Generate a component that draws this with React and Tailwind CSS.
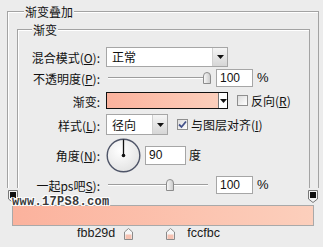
import React from 'react';

const cjk = { fontFamily: '"Noto Sans CJK SC", "Noto Sans", sans-serif' };

function Arrow(){
  return (
    <svg width="7" height="4" viewBox="0 0 7 4"><path d="M0 0 H7 L3.5 4 Z" fill="#111"/></svg>
  );
}

function SelectBox({ w, text, h }){
  return (
    <div className={`${w} ${h} ml-[6px] flex items-center bg-white border border-[#a6a6a6]`}>
      <span className="flex-1 pl-[5px] text-[12px] leading-none text-[#111]" style={cjk}>{text}</span>
      <div className="w-[15px] h-full border-l border-[#d0d0d0] bg-gradient-to-b from-[#f5f5f5] to-[#d6d6d6] flex items-center justify-center">
        <Arrow/>
      </div>
    </div>
  );
}

function Thumb(){
  return (
    <svg width="8" height="12" viewBox="0 0 8 12">
      <defs>
        <linearGradient id="tg" x1="0" x2="1">
          <stop offset="0" stopColor="#fafafa"/>
          <stop offset="1" stopColor="#c9c9c9"/>
        </linearGradient>
      </defs>
      <path d="M0.5 11.5 V4 Q0.5 0.5 4 0.5 Q7.5 0.5 7.5 4 V11.5 Z" fill="url(#tg)" stroke="#8c8c8c"/>
    </svg>
  );
}

function Slider({ pos }){
  return (
    <div className="relative w-[106px] h-[14px] ml-[6px]">
      <div className="absolute left-[2px] right-[4px] top-[6px] h-[2px] border-t border-[#9d9d9d] bg-white"/>
      <div className="absolute top-[1px]" style={{ left: pos }}><Thumb/></div>
    </div>
  );
}

function NumInput({ w, h, value }){
  return (
    <div className={`${w} ${h} bg-white border border-[#a6a6a6] flex items-center pl-[3px] text-[12px] text-[#111]`} style={{ fontFamily: '"Liberation Sans", Arial, sans-serif' }}>
      {value}
    </div>
  );
}

function Check({ checked }){
  return (
    <div className="w-[11px] h-[11px] border border-[#8e8e8e] bg-gradient-to-br from-[#dcdcdc] to-[#ffffff] flex items-center justify-center">
      {checked && (
        <svg width="9" height="9" viewBox="0 0 9 9"><path d="M1 4.5 L3.5 7 L8 1.5" fill="none" stroke="#44528a" strokeWidth="1.8"/></svg>
      )}
    </div>
  );
}

function Label({ children }){
  return <div className="w-[82px] pt-[2px] text-right text-[12px] leading-none text-[#111]" style={cjk}>{children}</div>;
}

function Dial(){
  return (
    <svg width="35" height="35" viewBox="0 0 35 35" className="ml-[6px]">
      <defs>
        <radialGradient id="dg" cx="0.4" cy="0.35" r="0.7">
          <stop offset="0" stopColor="#ffffff"/>
          <stop offset="1" stopColor="#e2e2e2"/>
        </radialGradient>
      </defs>
      <circle cx="17.5" cy="17.5" r="16.3" fill="url(#dg)" stroke="#4f5568" strokeWidth="1.4"/>
      <line x1="17.5" y1="17.5" x2="17.5" y2="1.5" stroke="#111" strokeWidth="1.3"/>
      <circle cx="17.5" cy="17.5" r="1.8" fill="#111"/>
    </svg>
  );
}

function TopStop(){
  return (
    <svg width="10" height="13" viewBox="0 0 10 13">
      <path d="M0.5 0.5 H9.5 V9 L5 12.5 L0.5 9 Z" fill="#f4f4f4" stroke="#777"/>
      <rect x="2" y="2" width="6" height="6" fill="#111"/>
    </svg>
  );
}

function BottomStop(){
  return (
    <svg width="9" height="12" viewBox="0 0 9 12">
      <path d="M0.5 11.5 V4 L4.5 0.5 L8.5 4 V11.5 Z" fill="#f6f6f6" stroke="#8a8a8a"/>
      <rect x="1.5" y="6.5" width="6" height="4.5" fill="#f6c2b2"/>
    </svg>
  );
}

export default function App(){
  return (
    <div className="w-[323px] h-[247px] bg-[#ececec] overflow-hidden relative">
      <div className="h-[188px] pt-[11px] pl-[7px]">
        <div className="relative w-[312px] h-[177px] border border-b-0 border-[#a3a3a3] shadow-[inset_1px_1px_0_#fff]">
          <span className="absolute left-[16px] top-[-7px] px-[1px] bg-[#ececec] text-[12px] leading-[14px] text-[#111]" style={cjk}>渐变叠加</span>

          <div className="relative ml-[9px] mt-[17px] w-[293px] h-[159px] border border-b-0 border-[#a3a3a3] shadow-[inset_1px_1px_0_#fff] pt-[16px]">
            <span className="absolute left-[14px] top-[-7px] px-[1px] bg-[#ececec] text-[12px] leading-[14px] text-[#111]" style={cjk}>渐变</span>

            <div className="flex items-center h-[21px]">
              <Label>混合模式(<u className="underline-offset-1">O</u>):</Label>
              <SelectBox w="w-[122px]" h="h-[20px]" text="正常"/>
            </div>

            <div className="flex items-center h-[22px]">
              <Label>不透明度(<u className="underline-offset-1">P</u>):</Label>
              <Slider pos={97}/>
              <div className="ml-[4px]"><NumInput w="w-[37px]" h="h-[18px]" value="100"/></div>
              <span className="ml-[4px] text-[13px] text-[#111]" style={{ fontFamily: '"Liberation Sans", Arial, sans-serif' }}>%</span>
            </div>

            <div className="flex items-center h-[23px]">
              <Label>渐变:</Label>
              <div className="ml-[6px] w-[122px] h-[17px] border border-[#111] flex">
                <div className="flex-1 bg-gradient-to-r from-[#fbb29d] to-[#fccfbc]"/>
                <div className="w-[9px] bg-white border-l border-[#777] flex items-center justify-center"><Arrow/></div>
              </div>
              <div className="ml-[9px]"><Check/></div>
              <span className="ml-[3px] text-[12px] leading-none text-[#111]" style={cjk}>反向(<u className="underline-offset-1">R</u>)</span>
            </div>

            <div className="flex items-center h-[25px]">
              <Label>样式(<u className="underline-offset-1">L</u>):</Label>
              <SelectBox w="w-[62px]" h="h-[21px]" text="径向"/>
              <div className="ml-[9px]"><Check checked/></div>
              <span className="ml-[3px] text-[12px] leading-none text-[#111]" style={cjk}>与图层对齐(<u className="underline-offset-1">I</u>)</span>
            </div>

            <div className="flex items-center h-[36px]">
              <Label>角度(<u className="underline-offset-1">N</u>):</Label>
              <Dial/>
              <div className="ml-[4px]"><NumInput w="w-[41px]" h="h-[19px]" value="90"/></div>
              <span className="ml-[3px] text-[12px] leading-none text-[#111]" style={cjk}>度</span>
            </div>

            <div className="flex items-center h-[24px]">
              <Label>一起ps吧<u className="underline-offset-1">S</u>):</Label>
              <Slider pos={60}/>
              <div className="ml-[4px]"><NumInput w="w-[37px]" h="h-[18px]" value="100"/></div>
              <span className="ml-[4px] text-[13px] text-[#111]" style={{ fontFamily: '"Liberation Sans", Arial, sans-serif' }}>%</span>
            </div>
          </div>
        </div>
      </div>

      <div className="mt-[2px] h-[13px] flex justify-between pl-[8px] pr-[5px]">
        <TopStop/>
        <TopStop/>
      </div>
      <div className="mt-[2px] ml-[12px] w-[302px] h-[21px] border border-[#a9a9a9] bg-gradient-to-r from-[#fbb29d] to-[#fccfbc]"/>
      <div className="flex items-center h-[15px] pl-[77px] text-[12.5px] text-[#1a1a1a]" style={{ fontFamily: '"Liberation Sans", Arial, sans-serif' }}>
        <span>fbb29d</span>
        <div className="ml-[9px] flex"><BottomStop/></div>
        <div className="ml-[33px] flex"><BottomStop/></div>
        <span className="ml-[12px]">fccfbc</span>
      </div>

      <div className="absolute left-[12px] top-[196px] text-[12px] font-bold leading-none text-[#3a3a3a] tracking-[0.3px] [text-shadow:1px_1px_0_#fff,-1px_-1px_0_#fff,1px_-1px_0_#fff,-1px_1px_0_#fff]" style={{ fontFamily: '"Liberation Mono", "DejaVu Sans Mono", monospace' }}>
        www.17PS8.com
      </div>
    </div>
  );
}
